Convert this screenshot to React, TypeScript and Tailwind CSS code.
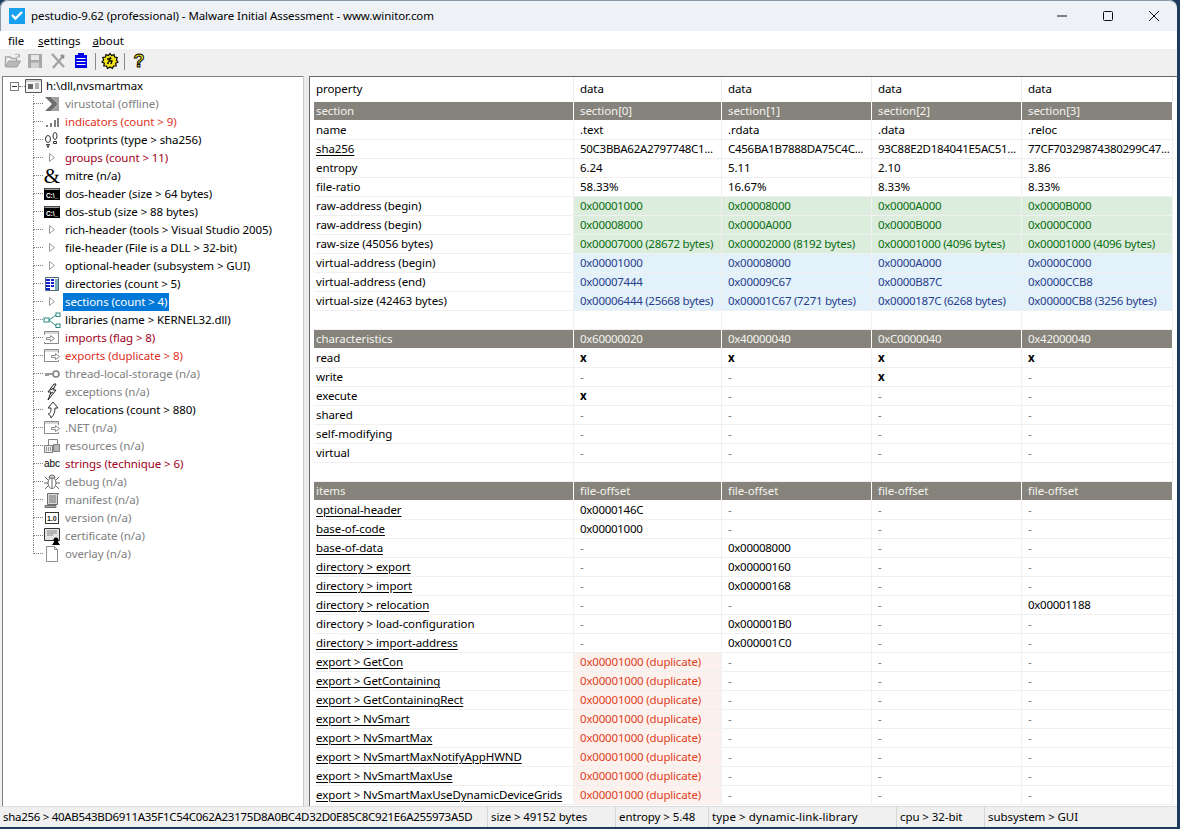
const font = "font-['Noto_Sans','Open_Sans',sans-serif]";

function Ico({ children }: { children: React.ReactNode }) {
  return (
    <svg width="18" height="18" viewBox="0 0 18 18" className="shrink-0">
      {children}
    </svg>
  );
}

const Tri = () => (
  <Ico>
    <path d="M6.5 4.500v8l5-4z" fill="#fff" stroke="#9a9a9a" />
  </Ico>
);

const DocOut = () => (
  <Ico>
    <path d="M15.500 6V2.500h-14v12h14V13" fill="#fff" stroke="#8a8a8a" />
    <path d="M2 3h13v2H2z" fill="#d8d8d8" />
    <path d="M8.500 8.500h4V6.500l4 3-4 3V10.500h-4z" fill="#fff" stroke="#8a8a8a" />
  </Ico>
);

const DocIn = () => (
  <Ico>
    <path d="M1.500 6V2.500h14v12h-14V13" fill="#fff" stroke="#8a8a8a" />
    <path d="M2 3h13v2H2z" fill="#d8d8d8" />
    <path d="M3.500 8.500h4V6.500l4 3-4 3V10.500h-4z" fill="#fff" stroke="#8a8a8a" />
  </Ico>
);

const Dos = () => (
  <Ico>
    <rect x="1" y="3" width="16" height="12" fill="#000" />
    <rect x="1.500" y="3.500" width="15" height="1.500" fill="#9a9a9a" />
    <text x="3" y="12.500" fontSize="6.500" fontWeight="700" fill="#fff" fontFamily="Liberation Sans, sans-serif">C:\_</text>
  </Ico>
);

const icons: Record<string, React.ReactNode> = {
  virustotal: (
    <Ico>
      <path d="M2 2h6l7 7-7 7H2l7-7z" fill="#6e6e6e" />
      <path d="M8 2h8v14H8l7-7z" fill="#a0a0a0" />
    </Ico>
  ),
  indicators: (
    <Ico>
      <path d="M3 12h2v2H3zM7 10h2v4H7zM11 7h2v7h-2zM14 5h2v9h-2z" fill="#808080" />
    </Ico>
  ),
  footprints: (
    <Ico>
      <ellipse cx="5" cy="8" rx="2.500" ry="3.500" fill="#fff" stroke="#333" />
      <path d="M3.500 13.500h3l-1.500 3z" fill="#fff" stroke="#333" />
      <ellipse cx="12" cy="5" rx="2" ry="3.500" fill="#fff" stroke="#333" />
      <path d="M10.500 10.500h3v2h-3z" fill="#fff" stroke="#333" />
    </Ico>
  ),
  mitre: (
    <span className="w-[18px] h-[18px] flex items-center justify-center text-[21px] leading-none font-normal font-['Liberation_Serif',serif] text-black shrink-0">
      &amp;
    </span>
  ),
  directories: (
    <Ico>
      <path d="M2.500 2.500h13v13h-13z" fill="#fff" stroke="#4a6a7a" />
      <path d="M3 4h4v2H3zM8 4h3v2H8zM3 7h4v2H3zM8 7h3v2H8zM3 10h4v2H3zM8 10h3v2H8zM3 13h4v2H3z" fill="#1020d0" />
      <path d="M12 4h3v11h-3z" fill="#7fb0b8" />
    </Ico>
  ),
  libraries: (
    <Ico>
      <rect x="1" y="7" width="5" height="4" fill="#fff" stroke="#2a8a80" />
      <rect x="13" y="2" width="4" height="3.500" fill="#fff" stroke="#2a8a80" />
      <rect x="13" y="13" width="4" height="3.500" fill="#fff" stroke="#2a8a80" />
      <path d="M6 9l7-5M6 9l7 6" stroke="#2a8a80" fill="none" />
    </Ico>
  ),
  tls: (
    <Ico>
      <circle cx="13" cy="9" r="3" fill="#fff" stroke="#808080" strokeWidth="1.600" />
      <path d="M2 8h8v2H6v1H2z" fill="#9a9a9a" />
    </Ico>
  ),
  exceptions: (
    <Ico>
      <path d="M11 1L5 9h3l-3 8 8-10h-3l3-6z" fill="#fff" stroke="#222" />
      <path d="M7 7l4-2M7 11l3-2" stroke="#222" />
    </Ico>
  ),
  relocations: (
    <Ico>
      <path d="M10 1l5 6h-3c0 4-1 7-4 10 0-3-3-4-3-4 2 0 3-2 3-6H5z" fill="#fff" stroke="#333" />
    </Ico>
  ),
  resources: (
    <Ico>
      <path d="M5.500 2.500h9v6h-9z" fill="#fff" stroke="#808080" />
      <path d="M1.500 8.500h8v7h-8z" fill="#e8e8e8" stroke="#808080" />
      <path d="M10.500 7.500h6v7h-6z" fill="#b8b8b8" stroke="#808080" />
      <path d="M3 11h1M5 11h1M7 11h1M3 13h1M5 13h1M7 13h1" stroke="#555" />
    </Ico>
  ),
  strings: (
    <span className="w-[18px] h-[18px] flex items-center justify-center text-[10px] font-normal leading-none font-['Liberation_Sans',sans-serif] text-black shrink-0">
      abc
    </span>
  ),
  debug: (
    <Ico>
      <ellipse cx="9" cy="10" rx="4" ry="5.500" fill="#fff" stroke="#666" />
      <path d="M6 5a3 3 0 0 1 6 0zM9 5v10M5 7L2 4M13 7l3-3M5 10H1M13 10h4M5 13l-3 3M13 13l3 3" fill="#ddd" stroke="#666" />
    </Ico>
  ),
  manifest: (
    <Ico>
      <path d="M4.500 2.500h11l-1 2v9h-10z" fill="#d8d8d8" stroke="#707070" />
      <path d="M2 14.500h11v2H2z" fill="#a8a8a8" stroke="#707070" />
      <path d="M6 5h7M6 7h7M6 9h7M6 11h7" stroke="#707070" />
    </Ico>
  ),
  version: (
    <Ico>
      <rect x="2.500" y="3.500" width="13" height="11" fill="#fff" stroke="#333" />
      <text x="4" y="12" fontSize="7" fontWeight="700" fill="#222" fontFamily="Liberation Sans, sans-serif">1.0</text>
    </Ico>
  ),
  certificate: (
    <Ico>
      <path d="M1.500 1.500h15v12h-15z" fill="#e4e4e4" stroke="#333" />
      <path d="M4 4h10M4 6h10M4 8h6" stroke="#888" />
      <circle cx="13" cy="13" r="2.500" fill="#000" />
      <path d="M11 15l-2 3h8l-2-3" fill="#000" />
    </Ico>
  ),
  overlay: (
    <Ico>
      <path d="M3.500 1.500h8l3 3v12h-11z" fill="#fff" stroke="#909090" />
      <path d="M11.500 1.500v3h3" fill="none" stroke="#909090" />
    </Ico>
  ),
};

const gray = "text-[#808080]";
const black = "text-black";
const red = "text-[#e0301e]";
const dark = "text-[#a00021]";

const treeRows: { label: string; color: string; icon: React.ReactNode; selected?: boolean }[] = [
  { label: "virustotal (offline)", color: gray, icon: icons.virustotal },
  { label: "indicators (count > 9)", color: red, icon: icons.indicators },
  { label: "footprints (type > sha256)", color: black, icon: icons.footprints },
  { label: "groups (count > 11)", color: dark, icon: <Tri /> },
  { label: "mitre (n/a)", color: black, icon: icons.mitre },
  { label: "dos-header (size > 64 bytes)", color: black, icon: <Dos /> },
  { label: "dos-stub (size > 88 bytes)", color: black, icon: <Dos /> },
  { label: "rich-header (tools > Visual Studio 2005)", color: black, icon: <Tri /> },
  { label: "file-header (File is a DLL > 32-bit)", color: black, icon: <Tri /> },
  { label: "optional-header (subsystem > GUI)", color: black, icon: <Tri /> },
  { label: "directories (count > 5)", color: black, icon: icons.directories },
  { label: "sections (count > 4)", color: "text-white", icon: <Tri />, selected: true },
  { label: "libraries (name > KERNEL32.dll)", color: black, icon: icons.libraries },
  { label: "imports (flag > 8)", color: dark, icon: <DocIn /> },
  { label: "exports (duplicate > 8)", color: red, icon: <DocOut /> },
  { label: "thread-local-storage (n/a)", color: gray, icon: icons.tls },
  { label: "exceptions (n/a)", color: gray, icon: icons.exceptions },
  { label: "relocations (count > 880)", color: black, icon: icons.relocations },
  { label: ".NET (n/a)", color: gray, icon: <DocOut /> },
  { label: "resources (n/a)", color: gray, icon: icons.resources },
  { label: "strings (technique > 6)", color: dark, icon: icons.strings },
  { label: "debug (n/a)", color: gray, icon: icons.debug },
  { label: "manifest (n/a)", color: gray, icon: icons.manifest },
  { label: "version (n/a)", color: gray, icon: icons.version },
  { label: "certificate (n/a)", color: gray, icon: icons.certificate },
  { label: "overlay (n/a)", color: gray, icon: icons.overlay },
];

function TreeRow({ row, last }: { row: (typeof treeRows)[number]; last: boolean }) {
  return (
    <div className="flex h-[18px] items-center">
      <div className="w-[30px] shrink-0" />
      <div className="w-[10px] h-full shrink-0 flex flex-col">
        <div className="h-[9px] border-l border-b border-dotted border-[#808080]" />
        <div className={last ? "h-[9px]" : "h-[9px] border-l border-dotted border-[#808080]"} />
      </div>
      {row.icon}
      <span
        className={`ml-[2px] px-[2px] h-[18px] leading-[17px] whitespace-nowrap ${row.color} ${
          row.selected ? "bg-[#0078d7]" : ""
        }`}
      >
        {row.label}
      </span>
    </div>
  );
}

type Tone = "plain" | "head" | "green" | "blue" | "dup";

const toneClass: Record<Tone, string> = {
  plain: "text-black",
  head: "bg-[#85837b] text-[#f4f4ee]",
  green: "bg-[#dcecdd] text-[#0b6e12]",
  blue: "bg-[#e3f1fb] text-[#27408b]",
  dup: "bg-[#fdf1ee] text-[#e0401c]",
};

type Row = { p: string; link?: boolean; tone?: Tone; d: string[]; dup?: boolean };

const dash4 = (a: string): string[] => [a, "-", "-", "-"];

const rows: Row[] = [
  { p: "section", tone: "head", d: ["section[0]", "section[1]", "section[2]", "section[3]"] },
  { p: "name", d: [".text", ".rdata", ".data", ".reloc"] },
  { p: "sha256", link: true, d: ["50C3BBA62A2797748C1...", "C456BA1B7888DA75C4C...", "93C88E2D184041E5AC51...", "77CF70329874380299C47..."] },
  { p: "entropy", d: ["6.24", "5.11", "2.10", "3.86"] },
  { p: "file-ratio", d: ["58.33%", "16.67%", "8.33%", "8.33%"] },
  { p: "raw-address (begin)", tone: "green", d: ["0x00001000", "0x00008000", "0x0000A000", "0x0000B000"] },
  { p: "raw-address (begin)", tone: "green", d: ["0x00008000", "0x0000A000", "0x0000B000", "0x0000C000"] },
  { p: "raw-size (45056 bytes)", tone: "green", d: ["0x00007000 (28672 bytes)", "0x00002000 (8192 bytes)", "0x00001000 (4096 bytes)", "0x00001000 (4096 bytes)"] },
  { p: "virtual-address (begin)", tone: "blue", d: ["0x00001000", "0x00008000", "0x0000A000", "0x0000C000"] },
  { p: "virtual-address (end)", tone: "blue", d: ["0x00007444", "0x00009C67", "0x0000B87C", "0x0000CCB8"] },
  { p: "virtual-size (42463 bytes)", tone: "blue", d: ["0x00006444 (25668 bytes)", "0x00001C67 (7271 bytes)", "0x0000187C (6268 bytes)", "0x00000CB8 (3256 bytes)"] },
  { p: "", d: ["", "", "", ""] },
  { p: "characteristics", tone: "head", d: ["0x60000020", "0x40000040", "0xC0000040", "0x42000040"] },
  { p: "read", d: ["x", "x", "x", "x"] },
  { p: "write", d: ["-", "-", "x", "-"] },
  { p: "execute", d: ["x", "-", "-", "-"] },
  { p: "shared", d: ["-", "-", "-", "-"] },
  { p: "self-modifying", d: ["-", "-", "-", "-"] },
  { p: "virtual", d: ["-", "-", "-", "-"] },
  { p: "", d: ["", "", "", ""] },
  { p: "items", tone: "head", d: ["file-offset", "file-offset", "file-offset", "file-offset"] },
  { p: "optional-header", link: true, d: dash4("0x0000146C") },
  { p: "base-of-code", link: true, d: dash4("0x00001000") },
  { p: "base-of-data", link: true, d: ["-", "0x00008000", "-", "-"] },
  { p: "directory > export", link: true, d: ["-", "0x00000160", "-", "-"] },
  { p: "directory > import", link: true, d: ["-", "0x00000168", "-", "-"] },
  { p: "directory > relocation", link: true, d: ["-", "-", "-", "0x00001188"] },
  { p: "directory > load-configuration", d: ["-", "0x000001B0", "-", "-"] },
  { p: "directory > import-address", link: true, d: ["-", "0x000001C0", "-", "-"] },
  ...[
    "GetCon",
    "GetContaining",
    "GetContainingRect",
    "NvSmart",
    "NvSmartMax",
    "NvSmartMaxNotifyAppHWND",
    "NvSmartMaxUse",
    "NvSmartMaxUseDynamicDeviceGrids",
  ].map((n) => ({ p: `export > ${n}`, link: true, dup: true, d: dash4("0x00001000 (duplicate)") })),
];

const colW = ["w-[260px]", "w-[148px]", "w-[150px]", "w-[150px]", "w-[151px]"];

function Cell({ i, className, children }: { i: number; className: string; children?: React.ReactNode }) {
  return (
    <div
      className={`${colW[i]} shrink-0 h-full pr-[1px] leading-[18px] whitespace-nowrap overflow-hidden border-b border-r ${className}`}
    >
      {children}
    </div>
  );
}

function DataCell({ row, i, text }: { row: Row; i: number; text: string }) {
  if (row.dup && i === 0)
    return <Cell i={1} className={`pl-[6px] tracking-[-0.18px] border-[#f0f0f0] ${toneClass.dup}`}>{text}</Cell>;
  const tone = row.tone ?? "plain";
  const border = tone === "head" ? "border-white" : "border-[#f0f0f0]";
  const c = tone === "plain" && text === "-" ? "text-[#777]" : toneClass[tone];
  // hex values and hashes run wider in this font than in the picture
  const tight = /^(0x|[0-9A-F]{8})/.test(text) ? "tracking-[-0.28px]" : "";
  return (
    <Cell i={i + 1} className={`pl-[6px] ${tight} ${border} ${c}`}>
      {text === "x" ? <b className="font-bold">x</b> : text}
    </Cell>
  );
}

function TableRow({ row }: { row: Row }) {
  const tone = row.tone ?? "plain";
  const labelTone = tone === "head" ? toneClass.head : "text-black";
  const border = tone === "head" ? "border-white" : "border-[#f0f0f0]";
  return (
    <div className="flex h-[19px]">
      <Cell i={0} className={`pl-[2px] ${labelTone} ${border}`}>
        {row.link ? <span className="underline underline-offset-2">{row.p}</span> : row.p}
      </Cell>
      {row.d.map((t, i) => (
        <DataCell key={i} row={row} i={i} text={t} />
      ))}
    </div>
  );
}

function StatusCell({ w, first, extra, children }: { w: string; first?: boolean; extra?: string; children: string }) {
  return (
    <div className={`${w} shrink-0 h-full whitespace-nowrap overflow-hidden leading-[19px] pl-[3px] ${extra ?? ""} ${first ? "" : "border-l border-[#d6d6d6]"}`}>
      {children}
    </div>
  );
}

export default function App() {
  return (
    <div className={`w-[1180px] h-[829px] bg-[#1d3a5f] overflow-hidden text-[11.5px] tracking-[-0.08px] ${font}`}>
      <div className="w-[1177px] h-[827px] flex flex-col bg-[#f0f0f0] rounded-t-lg overflow-hidden">
        {/* title bar */}
        <div className="h-[31px] shrink-0 flex items-center bg-[#eef2f7] border-t border-l border-[#8a99a8] rounded-t-lg">
          <svg width="16" height="16" viewBox="0 0 16 16" className="ml-[8px] shrink-0">
            <rect width="16" height="16" fill="#18a0ee" />
            <path d="M3 7l3.500 3.500L13 4" fill="none" stroke="#fff" strokeWidth="2.400" />
          </svg>
          <span className="ml-[6px] text-black whitespace-nowrap">
            pestudio-9.62 (professional) - Malware Initial Assessment - www.winitor.com
          </span>
          <div className="ml-auto flex items-center">
            <svg width="46" height="30" viewBox="0 0 46 30">
              <path d="M18 15h10" stroke="#111" />
            </svg>
            <svg width="46" height="30" viewBox="0 0 46 30">
              <rect x="18.500" y="10.500" width="9" height="9" rx="1" fill="none" stroke="#111" />
            </svg>
            <svg width="46" height="30" viewBox="0 0 46 30">
              <path d="M18 10l10 10M28 10L18 20" stroke="#111" />
            </svg>
          </div>
        </div>

        {/* menu */}
        <div className="h-[18px] shrink-0 bg-white flex items-center pt-[2px] pl-[8px] gap-[14px] text-black leading-none">
          <span>file</span>
          <span className="mr-[-2px]"><u>s</u>ettings</span>
          <span><u>a</u>bout</span>
        </div>

        {/* toolbar */}
        <div className="h-[24px] shrink-0 bg-[#f0f0f0] flex items-center pl-[4px]">
          <svg width="18" height="18" viewBox="0 0 18 18">
            <path d="M1.500 15V5h5l1 1.500h5V9" fill="none" stroke="#a8a8a8" strokeWidth="1.400" />
            <path d="M1.500 15l3-6h12l-3.500 6z" fill="#b8b8b8" stroke="#a0a0a0" />
            <path d="M11 2.500c2 -1 4 0 4.500 2M15.500 2v3h-3" fill="none" stroke="#a8a8a8" />
          </svg>
          <svg width="18" height="18" viewBox="0 0 18 18" className="ml-[4px]">
            <rect x="2" y="2" width="14" height="14" fill="#a8a8a8" />
            <rect x="5" y="3" width="8" height="5" fill="#e8e8e8" />
            <rect x="5" y="10.500" width="8" height="5.500" fill="#d0d0d0" />
          </svg>
          <svg width="18" height="18" viewBox="0 0 18 18" className="ml-[5px]">
            <path d="M3 2l12 13M15 3L4 16" stroke="#a4a4a4" strokeWidth="2.400" />
            <path d="M12 3l3 3" stroke="#888" strokeWidth="2" />
          </svg>
          <svg width="18" height="18" viewBox="0 0 18 18" className="ml-[5px]">
            <rect x="3" y="3" width="12" height="13" fill="#0000e8" />
            <rect x="6" y="1" width="6" height="3" fill="#0000e8" />
            <path d="M4.500 6.500h9M4.500 9.500h9M4.500 12.500h9" stroke="#fff" />
          </svg>
          <div className="w-[1px] h-[17px] bg-[#8a8a8a] ml-[5px]" />
          <svg width="18" height="18" viewBox="0 0 18 18" className="ml-[5px]">
            <path d="M9 1.500l1.600 2 2.400-1 .6 2.500 2.600.4-.8 2.600L17 10l-2.300 1.300.5 2.600-2.600.1L11.400 16.500 9 15l-2.400 1.500-1.200-2.500-2.600-.1.500-2.600L1 10l1.600-2-.8-2.600 2.600-.4.600-2.500 2.400 1z" fill="#f2e21a" stroke="#000" strokeWidth="1.200" />
            <path d="M6 7h3l-1 2h3l-1 3M9 5l1 2M6 11h2" fill="none" stroke="#000" strokeWidth="1.300" />
          </svg>
          <div className="w-[1px] h-[17px] bg-[#8a8a8a] ml-[5px]" />
          <span className="ml-[6px] w-[16px] h-[18px] flex items-center justify-center text-[18px] font-bold leading-none text-[#f5ec1e] font-['Liberation_Sans',sans-serif] [-webkit-text-stroke:1px_#000]">
            ?
          </span>
        </div>

        {/* panels */}
        <div className="flex-1 flex min-h-0 pt-[3px] pl-[2px]">
          <div className="w-[301px] shrink-0 h-full bg-white border-l border-t border-[#808080] overflow-hidden">
            <div className="flex h-[18px] items-center pl-[7px]">
              <div className="w-[9px] h-[9px] border border-[#808080] bg-white flex items-center justify-center shrink-0">
                <div className="w-[5px] h-[1px] bg-[#333]" />
              </div>
              <div className="w-[6px] border-b border-dotted border-[#808080] shrink-0" />
              <svg width="17" height="14" viewBox="0 0 17 14" className="shrink-0">
                <path d="M.5.5h16v13H.5z" fill="#f4f4f4" stroke="#555" />
                <path d="M1 1h15v2H1z" fill="#cfcfcf" />
                <path d="M3 5h5v5H3z" fill="#666" />
                <path d="M10 5h4M10 7h4M10 9h4" stroke="#666" />
              </svg>
              <span className="ml-[4px] text-black whitespace-nowrap">h:\dll,nvsmartmax</span>
            </div>
            {treeRows.map((r, i) => (
              <TreeRow key={r.label} row={r} last={i === treeRows.length - 1} />
            ))}
          </div>

          <div className="w-[6px] shrink-0 bg-[#ececec] border-l border-[#c8c8c8]" />

          <div className="flex-1 min-w-0 h-full bg-white border-l border-t border-[#696969] pl-[4px] overflow-hidden">
            <div className="flex h-[25px] text-black">
              {["property", "data", "data", "data", "data"].map((h, i) => (
                <div key={i} className={`${colW[i]} shrink-0 h-full border-r border-[#ececec] pt-[3px] leading-[18px] ${i === 0 ? "pl-[2px]" : "pl-[6px]"}`}>
                  {h}
                </div>
              ))}
            </div>
            {rows.map((r, i) => (
              <TableRow key={i} row={r} />
            ))}
          </div>
        </div>

        {/* status bar */}
        <div className="h-[21px] shrink-0 bg-[#f0f0f0] border-t border-[#dcdcdc] flex text-black">
          <StatusCell w="w-[487px]" first extra="tracking-[-0.3px]">sha256 &gt; 40AB543BD6911A35F1C54C062A23175D8A0BC4D32D0E85C8C921E6A255973A5D</StatusCell>
          <StatusCell w="w-[128px]">size &gt; 49152 bytes</StatusCell>
          <StatusCell w="w-[93px]">entropy &gt; 5.48</StatusCell>
          <StatusCell w="w-[188px]" extra="tracking-[0.1px]">type &gt; dynamic-link-library</StatusCell>
          <StatusCell w="w-[88px]">cpu &gt; 32-bit</StatusCell>
          <StatusCell w="w-[180px]">subsystem &gt; GUI</StatusCell>
        </div>
      </div>
    </div>
  );
}
